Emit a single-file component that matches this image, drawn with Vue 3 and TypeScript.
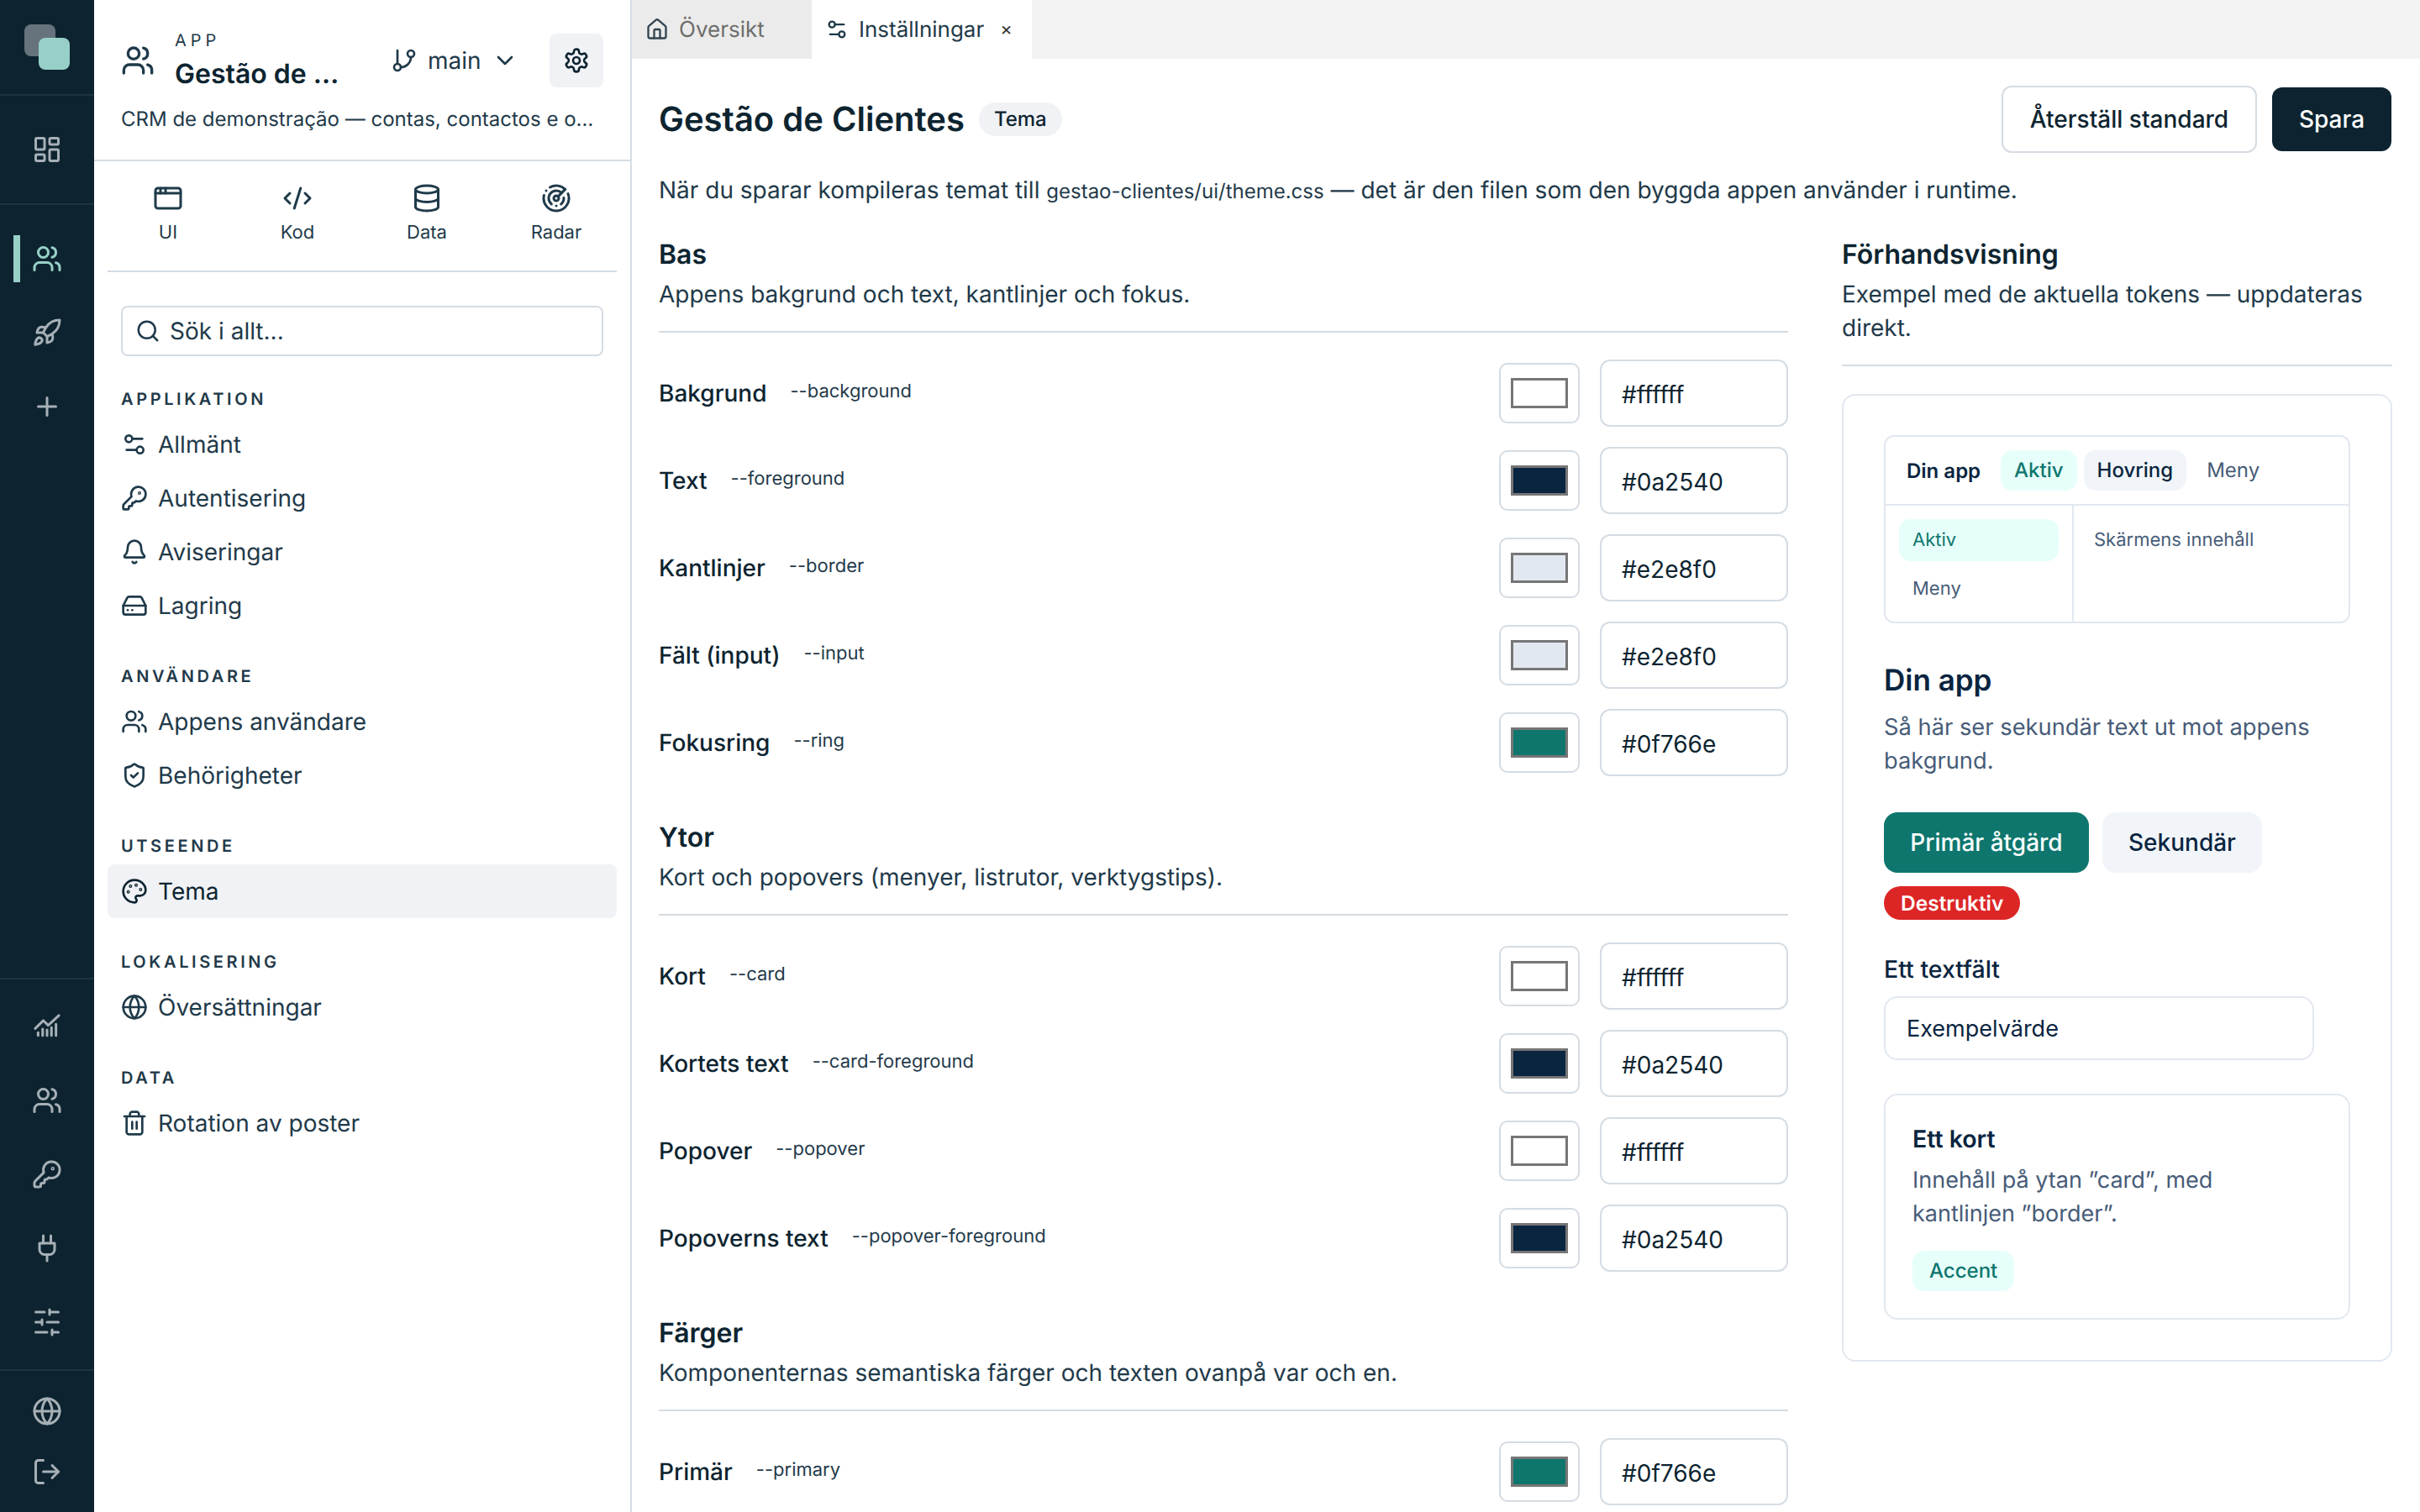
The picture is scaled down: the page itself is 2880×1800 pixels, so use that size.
<script setup lang="ts">
import { h } from 'vue'

const c = (x: number, y: number, r: number) =>
  `M${x - r} ${y}a${r} ${r} 0 1 0 ${2 * r} 0a${r} ${r} 0 1 0 ${-2 * r} 0z`

const icons: Record<string, string[]> = {
  dashboard: ['M4 3h5a1 1 0 0 1 1 1v7a1 1 0 0 1-1 1H4a1 1 0 0 1-1-1V4a1 1 0 0 1 1-1z', 'M15 3h5a1 1 0 0 1 1 1v3a1 1 0 0 1-1 1h-5a1 1 0 0 1-1-1V4a1 1 0 0 1 1-1z', 'M15 12h5a1 1 0 0 1 1 1v7a1 1 0 0 1-1 1h-5a1 1 0 0 1-1-1v-7a1 1 0 0 1 1-1z', 'M4 16h5a1 1 0 0 1 1 1v3a1 1 0 0 1-1 1H4a1 1 0 0 1-1-1v-3a1 1 0 0 1 1-1z'],
  users: ['M16 21v-2a4 4 0 0 0-4-4H6a4 4 0 0 0-4 4v2', c(9, 7, 4), 'M22 21v-2a4 4 0 0 0-3-3.87', 'M16 3.13a4 4 0 0 1 0 7.75'],
  rocket: ['M4.5 16.5c-1.5 1.26-2 5-2 5s3.74-.5 5-2c.71-.84.7-2.13-.09-2.91a2.18 2.18 0 0 0-2.91-.09z', 'm12 15-3-3a22 22 0 0 1 2-3.95A12.88 12.88 0 0 1 22 2c0 2.72-.78 7.5-6 11a22.35 22.35 0 0 1-4 2z', 'M9 12H4s.55-3.03 2-4c1.62-1.08 5 0 5 0', 'M12 15v5s3.03-.55 4-2c1.08-1.62 0-5 0-5'],
  plus: ['M5 12h14', 'M12 5v14'],
  chart: ['M2.6 13.6 9.1 7.3l3.8 3.8L21.4 3.3', 'M4.9 19.2v-2.4', 'M8.5 19.2v-5.2', 'M12 19.2v-4.6', 'M15.5 19.2v-6.4', 'M19.1 19.2v-9'],
  key: ['M2.586 17.414A2 2 0 0 0 2 18.828V21a1 1 0 0 0 1 1h3a1 1 0 0 0 1-1v-1a1 1 0 0 1 1-1h1a1 1 0 0 0 1-1v-1a1 1 0 0 1 1-1h.172a2 2 0 0 0 1.414-.586l.814-.814a6.5 6.5 0 1 0-4-4z', c(16.5, 7.5, 0.5)],
  plug: ['M12 22v-5', 'M9 8V2', 'M15 8V2', 'M18 8v5a4 4 0 0 1-4 4h-4a4 4 0 0 1-4-4V8Z'],
  sliders: ['M21 4h-7', 'M10 4H3', 'M21 12h-9', 'M8 12H3', 'M21 20h-5', 'M12 20H3', 'M14 2v4', 'M8 10v4', 'M16 18v4'],
  globe: [c(12, 12, 10), 'M12 2a14.5 14.5 0 0 0 0 20 14.5 14.5 0 0 0 0-20', 'M2 12h20'],
  logout: ['M9 21H5a2 2 0 0 1-2-2V5a2 2 0 0 1 2-2h4', 'M16 17l5-5-5-5', 'M21 12H9'],
  branch: ['M6 3v12', c(18, 6, 3), c(6, 18, 3), 'M18 9a9 9 0 0 1-9 9'],
  chevron: ['m6 9 6 6 6-6'],
  gear: ['M12.22 2h-.44a2 2 0 0 0-2 2v.18a2 2 0 0 1-1 1.73l-.43.25a2 2 0 0 1-2 0l-.15-.08a2 2 0 0 0-2.73.73l-.22.38a2 2 0 0 0 .73 2.73l.15.1a2 2 0 0 1 1 1.72v.51a2 2 0 0 1-1 1.74l-.15.09a2 2 0 0 0-.73 2.73l.22.38a2 2 0 0 0 2.73.73l.15-.08a2 2 0 0 1 2 0l.43.25a2 2 0 0 1 1 1.73V20a2 2 0 0 0 2 2h.44a2 2 0 0 0 2-2v-.18a2 2 0 0 1 1-1.73l.43-.25a2 2 0 0 1 2 0l.15.08a2 2 0 0 0 2.73-.73l.22-.39a2 2 0 0 0-.73-2.73l-.15-.08a2 2 0 0 1-1-1.74v-.5a2 2 0 0 1 1-1.74l.15-.09a2 2 0 0 0 .73-2.73l-.22-.38a2 2 0 0 0-2.73-.73l-.15.08a2 2 0 0 1-2 0l-.43-.25a2 2 0 0 1-1-1.73V4a2 2 0 0 0-2-2z', c(12, 12, 3)],
  window: ['M4 4h16a2 2 0 0 1 2 2v12a2 2 0 0 1-2 2H4a2 2 0 0 1-2-2V6a2 2 0 0 1 2-2z', 'M10 4v4', 'M2 8h20', 'M6 4v4'],
  code: ['m18 16 4-4-4-4', 'm6 8-4 4 4 4', 'm14.5 4-5 16'],
  database: ['M3 5a9 3 0 1 0 18 0a9 3 0 1 0-18 0z', 'M3 5V19A9 3 0 0 0 21 19V5', 'M3 12A9 3 0 0 0 21 12'],
  radar: ['M19.07 4.93A10 10 0 0 0 6.99 3.34', 'M4 6h.01', 'M2.29 9.62A10 10 0 1 0 21.31 8.35', 'M16.24 7.76A6 6 0 1 0 8.23 16.67', 'M12 18h.01', 'M17.99 11.66A6 6 0 0 1 15.77 16.67', c(12, 12, 2), 'm13.41 10.59 5.66-5.66'],
  search: ['m21 21-4.34-4.34', c(11, 11, 8)],
  settings2: ['M14 17H5', 'M19 7h-9', c(17, 17, 3), c(7, 7, 3)],
  bell: ['M10.268 21a2 2 0 0 0 3.464 0', 'M3.262 15.326A1 1 0 0 0 4 17h16a1 1 0 0 0 .74-1.673C19.41 13.956 18 12.499 18 8A6 6 0 0 0 6 8c0 4.499-1.411 5.956-2.738 7.326'],
  drive: ['M22 12H2', 'M5.45 5.11 2 12v6a2 2 0 0 0 2 2h16a2 2 0 0 0 2-2v-6l-3.45-6.89A2 2 0 0 0 16.76 4H7.24a2 2 0 0 0-1.79 1.11z', 'M6 16h.01', 'M10 16h.01'],
  shield: ['M20 13c0 5-3.5 7.5-7.66 8.95a1 1 0 0 1-.67-.01C7.5 20.5 4 18 4 13V6a1 1 0 0 1 1-1c2 0 4.5-1.2 6.24-2.72a1.17 1.17 0 0 1 1.52 0C14.51 3.81 17 5 19 5a1 1 0 0 1 1 1z', 'm9 12 2 2 4-4'],
  palette: ['M12 22a1 1 0 0 1 0-20 10 9 0 0 1 10 9 5 5 0 0 1-5 5h-2.25a1.75 1.75 0 0 0-1.4 2.8l.3.4a1.75 1.75 0 0 1-1.4 2.8z', c(13.5, 6.5, 0.5), c(17.5, 10.5, 0.5), c(6.5, 12.5, 0.5), c(8.5, 7.5, 0.5)],
  trash: ['M3 6h18', 'M19 6v14c0 1-1 2-2 2H7c-1 0-2-1-2-2V6', 'M8 6V4c0-1 1-2 2-2h4c1 0 2 1 2 2v2', 'M10 11v6', 'M14 11v6'],
  home: ['M15 21v-8a1 1 0 0 0-1-1h-4a1 1 0 0 0-1 1v8', 'M3 10a2 2 0 0 1 .709-1.528l7-5.999a2 2 0 0 1 2.582 0l7 5.999A2 2 0 0 1 21 10v9a2 2 0 0 1-2 2H5a2 2 0 0 1-2-2z'],
}

const Ic = (props: { name: string; size: number; sw?: number }) =>
  h(
    'svg',
    {
      width: props.size,
      height: props.size,
      viewBox: '0 0 24 24',
      fill: 'none',
      stroke: 'currentColor',
      'stroke-width': props.sw ?? 2,
      'stroke-linecap': 'round',
      'stroke-linejoin': 'round',
      style: 'flex:none;display:block',
    },
    icons[props.name].map((d) => h('path', { d })),
  )
Ic.props = ['name', 'size', 'sw']

const railMid = ['chart', 'users', 'key', 'plug', 'sliders']
const appTabs = [
  { icon: 'window', label: 'UI' },
  { icon: 'code', label: 'Kod' },
  { icon: 'database', label: 'Data' },
  { icon: 'radar', label: 'Radar' },
]
const navGroups = [
  { title: 'Applikation', items: [{ icon: 'settings2', label: 'Allmänt' }, { icon: 'key', label: 'Autentisering' }, { icon: 'bell', label: 'Aviseringar' }, { icon: 'drive', label: 'Lagring' }] },
  { title: 'Användare', items: [{ icon: 'users', label: 'Appens användare' }, { icon: 'shield', label: 'Behörigheter' }] },
  { title: 'Utseende', items: [{ icon: 'palette', label: 'Tema', active: true }] },
  { title: 'Lokalisering', items: [{ icon: 'globe', label: 'Översättningar' }] },
  { title: 'Data', items: [{ icon: 'trash', label: 'Rotation av poster' }] },
]
const sections = [
  {
    title: 'Bas',
    sub: 'Appens bakgrund och text, kantlinjer och fokus.',
    rows: [
      ['Bakgrund', '--background', '#ffffff'],
      ['Text', '--foreground', '#0a2540'],
      ['Kantlinjer', '--border', '#e2e8f0'],
      ['Fält (input)', '--input', '#e2e8f0'],
      ['Fokusring', '--ring', '#0f766e'],
    ],
  },
  {
    title: 'Ytor',
    sub: 'Kort och popovers (menyer, listrutor, verktygstips).',
    rows: [
      ['Kort', '--card', '#ffffff'],
      ['Kortets text', '--card-foreground', '#0a2540'],
      ['Popover', '--popover', '#ffffff'],
      ['Popoverns text', '--popover-foreground', '#0a2540'],
    ],
  },
  {
    title: 'Färger',
    sub: 'Komponenternas semantiska färger och texten ovanpå var och en.',
    rows: [['Primär', '--primary', '#0f766e']],
  },
]
</script>

<template>
  <div class="app">
    <aside class="rail">
      <div class="rail-logo">
        <div class="logo">
          <span class="logo-back"></span>
          <span class="logo-front"></span>
        </div>
      </div>
      <div class="rail-home">
        <div class="rail-btn"><Ic name="dashboard" :size="36" /></div>
      </div>
      <div class="rail-apps">
        <div class="rail-btn active"><span class="rail-bar"></span><Ic name="users" :size="36" /></div>
        <div class="rail-btn"><Ic name="rocket" :size="36" /></div>
        <div class="rail-btn"><Ic name="plus" :size="36" /></div>
      </div>
      <div class="rail-tools">
        <div v-for="n in railMid" :key="n" class="rail-btn"><Ic :name="n" :size="36" /></div>
      </div>
      <div class="rail-foot">
        <div class="rail-btn short"><Ic name="globe" :size="36" /></div>
        <div class="rail-btn short"><Ic name="logout" :size="36" /></div>
      </div>
    </aside>

    <aside class="panel">
      <div class="panel-head">
        <div class="head-row">
          <Ic name="users" :size="40" class="head-icon" />
          <div class="head-titles">
            <div class="head-kicker">APP</div>
            <div class="head-name">Gestão de Clientes</div>
          </div>
          <div class="branch">
            <Ic name="branch" :size="32" />
            <span>main</span>
            <Ic name="chevron" :size="32" />
          </div>
          <div class="gear"><Ic name="gear" :size="32" /></div>
        </div>
        <div class="head-desc">CRM de demonstração — contas, contactos e oportunidades</div>
      </div>

      <div class="app-tabs">
        <div v-for="t in appTabs" :key="t.label" class="app-tab">
          <Ic :name="t.icon" :size="36" />
          <span>{{ t.label }}</span>
        </div>
      </div>
      <div class="tabs-rule"></div>

      <div class="search">
        <Ic name="search" :size="30" />
        <span>Sök i allt...</span>
      </div>

      <nav class="nav">
        <div v-for="g in navGroups" :key="g.title" class="nav-group">
          <div class="nav-title">{{ g.title }}</div>
          <div v-for="i in g.items" :key="i.label" class="nav-item" :class="{ on: i.active }">
            <Ic :name="i.icon" :size="32" />
            <span>{{ i.label }}</span>
          </div>
        </div>
      </nav>
    </aside>

    <main class="main">
      <div class="tabbar">
        <div class="tab idle"><Ic name="home" :size="28" /><span>Översikt</span></div>
        <div class="tab current">
          <Ic name="settings2" :size="28" />
          <span>Inställningar</span>
          <span class="tab-x">×</span>
        </div>
      </div>

      <div class="content">
        <header class="page-head">
          <h1>Gestão de Clientes</h1>
          <span class="badge">Tema</span>
          <div class="actions">
            <button class="btn ghost">Återställ standard</button>
            <button class="btn dark">Spara</button>
          </div>
        </header>
        <p class="intro">
          När du sparar kompileras temat till <code>gestao-clientes/ui/theme.css</code> — det är den filen som den byggda appen använder i runtime.
        </p>

        <div class="columns">
          <div class="tokens">
            <section v-for="s in sections" :key="s.title" class="token-section">
              <div class="sec-head">
                <h2>{{ s.title }}</h2>
                <p>{{ s.sub }}</p>
              </div>
              <div class="rows">
                <div v-for="r in s.rows" :key="r[1]" class="row">
                  <div class="row-label">
                    <span class="row-name">{{ r[0] }}</span>
                    <span class="row-var">{{ r[1] }}</span>
                  </div>
                  <div class="swatch"><span :style="{ background: r[2] }"></span></div>
                  <input class="hex" :value="r[2]" readonly />
                </div>
              </div>
            </section>
          </div>

          <div class="preview">
            <div class="sec-head">
              <h2>Förhandsvisning</h2>
              <p>Exempel med de aktuella tokens — uppdateras direkt.</p>
            </div>
            <div class="pv-card">
              <div class="pv-shell">
                <div class="pv-top">
                  <span class="pv-brand">Din app</span>
                  <span class="pill accent">Aktiv</span>
                  <span class="pill hover">Hovring</span>
                  <span class="pill plain">Meny</span>
                </div>
                <div class="pv-body">
                  <div class="pv-side">
                    <div class="side-item sel">Aktiv</div>
                    <div class="side-item">Meny</div>
                  </div>
                  <div class="pv-screen">Skärmens innehåll</div>
                </div>
              </div>

              <h3 class="pv-title">Din app</h3>
              <p class="pv-text">Så här ser sekundär text ut mot appens bakgrund.</p>

              <div class="pv-btns">
                <button class="pbtn primary">Primär åtgärd</button>
                <button class="pbtn second">Sekundär</button>
                <span class="danger">Destruktiv</span>
              </div>

              <label class="pv-label">Ett textfält</label>
              <input class="pv-input" value="Exempelvärde" readonly />

              <div class="pv-inner">
                <div class="inner-title">Ett kort</div>
                <p class="inner-text">Innehåll på ytan ”card”, med kantlinjen ”border”.</p>
                <span class="inner-pill">Accent</span>
              </div>
            </div>
          </div>
        </div>
      </div>
    </main>
  </div>
</template>

<style>
html,
body {
  margin: 0;
  background: #fff;
}
</style>

<style scoped>
.app {
  display: flex;
  width: 2880px;
  height: 1800px;
  overflow: hidden;
  font-family: Inter, 'Noto Sans', sans-serif;
  color: #0d2430;
  text-rendering: geometricPrecision;
  background: #fff;
}
.rail {
  width: 112px;
  flex: none;
  display: flex;
  flex-direction: column;
  background: #0d2430;
  color: #a6b0b6;
}
.rail-logo {
  height: 112px;
  flex: none;
  display: flex;
  align-items: center;
  justify-content: center;
}
.logo {
  position: relative;
  width: 54px;
  height: 54px;
}
.logo-back,
.logo-front {
  position: absolute;
  width: 37px;
  height: 38px;
  border-radius: 8px;
}
.logo-back {
  left: 0;
  top: 0;
  background: #66737c;
}
.logo-front {
  right: 0;
  bottom: 0;
  background: #98d0c8;
}
.rail-home {
  border-top: 2px solid #1b3442;
  border-bottom: 2px solid #1b3442;
  height: 128px;
  flex: none;
  display: flex;
  align-items: center;
  box-sizing: content-box;
}
.rail-apps {
  flex: 1;
  padding-top: 20px;
}
.rail-tools {
  border-top: 2px solid #1b3442;
  padding: 12px 0;
}
.rail-foot {
  border-top: 2px solid #1b3442;
  padding: 12px 0;
}
.rail-btn {
  position: relative;
  width: 100%;
  height: 88px;
  display: flex;
  align-items: center;
  justify-content: center;
}
.rail-btn.short {
  height: 72px;
}
.rail-btn.active {
  color: #98d0c8;
}
.rail-bar {
  position: absolute;
  left: 16px;
  top: 16px;
  width: 8px;
  height: 56px;
  background: #98d0c8;
}

.panel {
  width: 640px;
  flex: none;
  box-sizing: border-box;
  border-right: 2px solid #d5dce3;
  color: #1f3a4a;
  display: flex;
  flex-direction: column;
}
.panel-head {
  height: 192px;
  box-sizing: border-box;
  border-bottom: 2px solid #d5dce3;
  padding: 40px 32px 0;
}
.head-row {
  display: flex;
  align-items: center;
  height: 64px;
}
.head-icon {
  margin-right: 24px;
}
.head-titles {
  width: 204px;
  flex: none;
  color: #0d2430;
}
.head-kicker {
  font-size: 20px;
  line-height: 26px;
  letter-spacing: 5px;
  color: #1f3a4a;
  margin-top: 1px;
}
.head-name {
  font-size: 32px;
  line-height: 46px;
  margin-top: 4px;
  font-weight: 600;
  white-space: nowrap;
  overflow: hidden;
  text-overflow: ellipsis;
}
.branch {
  display: flex;
  align-items: center;
  margin-left: 53px;
  font-size: 28px;
  gap: 12px;
  font-weight: 400;
  color: #1f3a4a;
}
.gear {
  margin-left: auto;
  width: 64px;
  height: 64px;
  border-radius: 8px;
  background: #f0f2f5;
  display: flex;
  align-items: center;
  justify-content: center;
  color: #0d2430;
}
.head-desc {
  margin-top: 18px;
  font-size: 24px;
  line-height: 40px;
  white-space: nowrap;
  overflow: hidden;
  text-overflow: ellipsis;
}
.app-tabs {
  display: grid;
  grid-template-columns: repeat(4, 1fr);
  padding: 0 11px;
  height: 130px;
  flex: none;
}
.app-tab {
  display: flex;
  flex-direction: column;
  align-items: center;
  padding-top: 26px;
  font-size: 22px;
  line-height: 32px;
  gap: 7px;
}
.tabs-rule {
  height: 2px;
  margin: 0 16px;
  background: #d5dce3;
  flex: none;
}
.search {
  margin: 40px 32px 0;
  height: 60px;
  box-sizing: border-box;
  border: 2px solid #d5dce3;
  border-radius: 8px;
  display: flex;
  align-items: center;
  gap: 11px;
  padding-left: 15px;
  font-size: 28px;
  flex: none;
}
.nav {
  padding: 35px 16px 0;
}
.nav-group + .nav-group {
  margin-top: 36px;
}
.nav-title {
  padding-left: 16px;
  height: 32px;
  line-height: 32px;
  margin-bottom: 6px;
  font-size: 20px;
  font-weight: 600;
  letter-spacing: 3.6px;
  text-transform: uppercase;
}
.nav-item {
  height: 64px;
  display: flex;
  align-items: center;
  gap: 12px;
  padding-left: 16px;
  font-size: 28px;
  border-radius: 8px;
}
.nav-item.on {
  background: #f0f2f5;
  color: #0d2430;
}

.main {
  flex: 1;
  min-width: 0;
  display: flex;
  flex-direction: column;
}
.tabbar {
  height: 70px;
  flex: none;
  display: flex;
  background: #f3f3f3;
}
.tab {
  display: flex;
  align-items: center;
  font-size: 26px;
  box-sizing: border-box;
}
.tab.idle {
  width: 214px;
  background: #ebebeb;
  color: #6d6d6d;
  padding-left: 16px;
  gap: 12px;
}
.tab.idle :deep(svg) {
  color: #33444f;
}
.tab.current {
  width: 262px;
  background: #fff;
  padding-left: 16px;
  gap: 12px;
  color: #1f3a4a;
}
.tab-x {
  font-size: 22px;
  margin-left: 7px;
  color: #333;
}
.content {
  padding: 32px 34px 0 32px;
}
.page-head {
  display: flex;
  align-items: center;
  height: 80px;
}
h1 {
  margin: 0;
  font-size: 40px;
  line-height: 56px;
  font-weight: 600;
}
.badge {
  margin-left: 17px;
  height: 40px;
  line-height: 40px;
  padding: 0 18px;
  border-radius: 20px;
  background: #f0f2f5;
  font-size: 24px;
  font-weight: 500;
}
.actions {
  margin-left: auto;
  display: flex;
  align-items: center;
  gap: 18px;
}
.btn {
  font: inherit;
  font-size: 28px;
  font-weight: 500;
  border-radius: 12px;
  cursor: pointer;
}
.btn.ghost {
  height: 80px;
  width: 304px;
  background: #fff;
  color: #0d2430;
  border: 2px solid #d5dce3;
}
.btn.dark {
  height: 76px;
  width: 142px;
  border: 0;
  background: #0d2430;
  color: #fff;
}
.intro {
  margin: 20px 0 0;
  font-size: 28px;
  line-height: 48px;
  color: #1f3a4a;
}
code {
  font-family: inherit;
  font-size: 24px;
}
.columns {
  display: grid;
  grid-template-columns: 1fr 655px;
  column-gap: 64px;
  margin: 27px -1px 0 0;
}
.sec-head {
  border-bottom: 2px solid #d5dce3;
  padding-bottom: 24px;
}
h2 {
  margin: 0;
  font-size: 32px;
  line-height: 48px;
  font-weight: 600;
}
.sec-head p {
  margin: 3px 0 0;
  font-size: 28px;
  line-height: 40px;
  color: #1f3a4a;
}
.token-section + .token-section {
  margin-top: 49px;
}
.rows {
  margin-top: 32px;
  display: flex;
  flex-direction: column;
  gap: 24px;
}
.row {
  display: flex;
  align-items: center;
  height: 80px;
}
.row-label {
  flex: 1;
  display: flex;
  align-items: center;
  gap: 28px;
}
.row-name {
  font-size: 28px;
  font-weight: 500;
}
.row-var {
  font-size: 22px;
  color: #1f3a4a;
  margin-top: -4px;
}
.swatch {
  width: 96px;
  height: 72px;
  box-sizing: border-box;
  border: 2px solid #d5dce3;
  border-radius: 10px;
  display: flex;
  align-items: center;
  justify-content: center;
  margin-right: 24px;
}
.swatch span {
  width: 68px;
  height: 36px;
  box-sizing: border-box;
  border: 3px solid #767676;
}
.hex {
  width: 224px;
  height: 80px;
  box-sizing: border-box;
  border: 2px solid #d5dce3;
  border-radius: 12px;
  padding: 4px 0 0 24px;
  font: inherit;
  font-size: 28px;
  color: #0d2430;
  outline: none;
}

.pv-card {
  margin-top: 33px;
  border: 2px solid #e2e8f0;
  border-radius: 16px;
  padding: 47px 48px 48px;
  color: #0a2540;
}
.pv-shell {
  border: 2px solid #e2e8f0;
  border-radius: 12px;
  overflow: hidden;
}
.pv-top {
  height: 82px;
  box-sizing: border-box;
  border-bottom: 2px solid #e2e8f0;
  display: flex;
  align-items: center;
  padding-left: 25px;
  gap: 8px;
  font-size: 24px;
}
.pv-brand {
  font-weight: 600;
  margin-right: 16px;
}
.pill {
  height: 48px;
  line-height: 48px;
  padding: 0 16px;
  border-radius: 14px;
  font-weight: 500;
}
.pill.accent {
  background: #e6fffa;
  color: #0f766e;
}
.pill.hover {
  background: #f1f5f9;
}
.pill.plain {
  color: #475c78;
  font-weight: 400;
}
.pv-body {
  display: flex;
  height: 138px;
}
.pv-side {
  width: 224px;
  box-sizing: border-box;
  border-right: 2px solid #e2e8f0;
  padding: 16px 16px 0;
  font-size: 22px;
  color: #475c78;
}
.side-item {
  height: 50px;
  line-height: 50px;
  padding-left: 16px;
  border-radius: 14px;
}
.side-item + .side-item {
  margin-top: 8px;
}
.side-item.sel {
  background: #e6fffa;
  color: #0f766e;
}
.pv-screen {
  padding: 16px 0 0 24px;
  line-height: 50px;
  font-size: 22px;
  color: #475c78;
}
.pv-title {
  margin: 42px 0 0;
  font-size: 35px;
  line-height: 52px;
  font-weight: 600;
}
.pv-text {
  margin: 10px 0 0;
  font-size: 27.3px;
  line-height: 40px;
  color: #475c78;
}
.pv-btns {
  display: flex;
  flex-wrap: wrap;
  gap: 16px;
  margin-top: 41px;
}
.pbtn {
  font: inherit;
  font-size: 28px;
  font-weight: 500;
  height: 72px;
  border: 0;
  border-radius: 16px;
}
.pbtn.primary {
  width: 244px;
  background: #0f766e;
  color: #f8fffe;
}
.pbtn.second {
  width: 190px;
  background: #f1f5f9;
  color: #0a2540;
}
.danger {
  height: 40px;
  line-height: 40px;
  padding: 0 20px;
  border-radius: 20px;
  background: #dc2626;
  color: #fff;
  font-size: 24.5px;
  font-weight: 600;
}
.pv-label {
  display: block;
  margin-top: 39px;
  font-size: 28.5px;
  line-height: 40px;
  font-weight: 500;
}
.pv-input {
  display: block;
  margin-top: 12px;
  width: 512px;
  height: 76px;
  box-sizing: border-box;
  border: 2px solid #e2e8f0;
  border-radius: 16px;
  padding: 0 0 0 25px;
  font: inherit;
  font-size: 27px;
  color: #0a2540;
  outline: none;
}
.pv-inner {
  margin-top: 40px;
  border: 2px solid #e2e8f0;
  border-radius: 16px;
  padding: 32px 32px 32px;
}
.inner-title {
  font-size: 28.5px;
  line-height: 40px;
  font-weight: 600;
}
.inner-text {
  margin: 9px 0 0;
  font-size: 27px;
  line-height: 40px;
  color: #475c78;
  max-width: 420px;
}
.inner-pill {
  display: inline-block;
  margin-top: 24px;
  height: 48px;
  line-height: 48px;
  padding: 0 20px;
  border-radius: 14px;
  background: #e6fffa;
  color: #0f766e;
  font-size: 24px;
  font-weight: 500;
}
</style>
